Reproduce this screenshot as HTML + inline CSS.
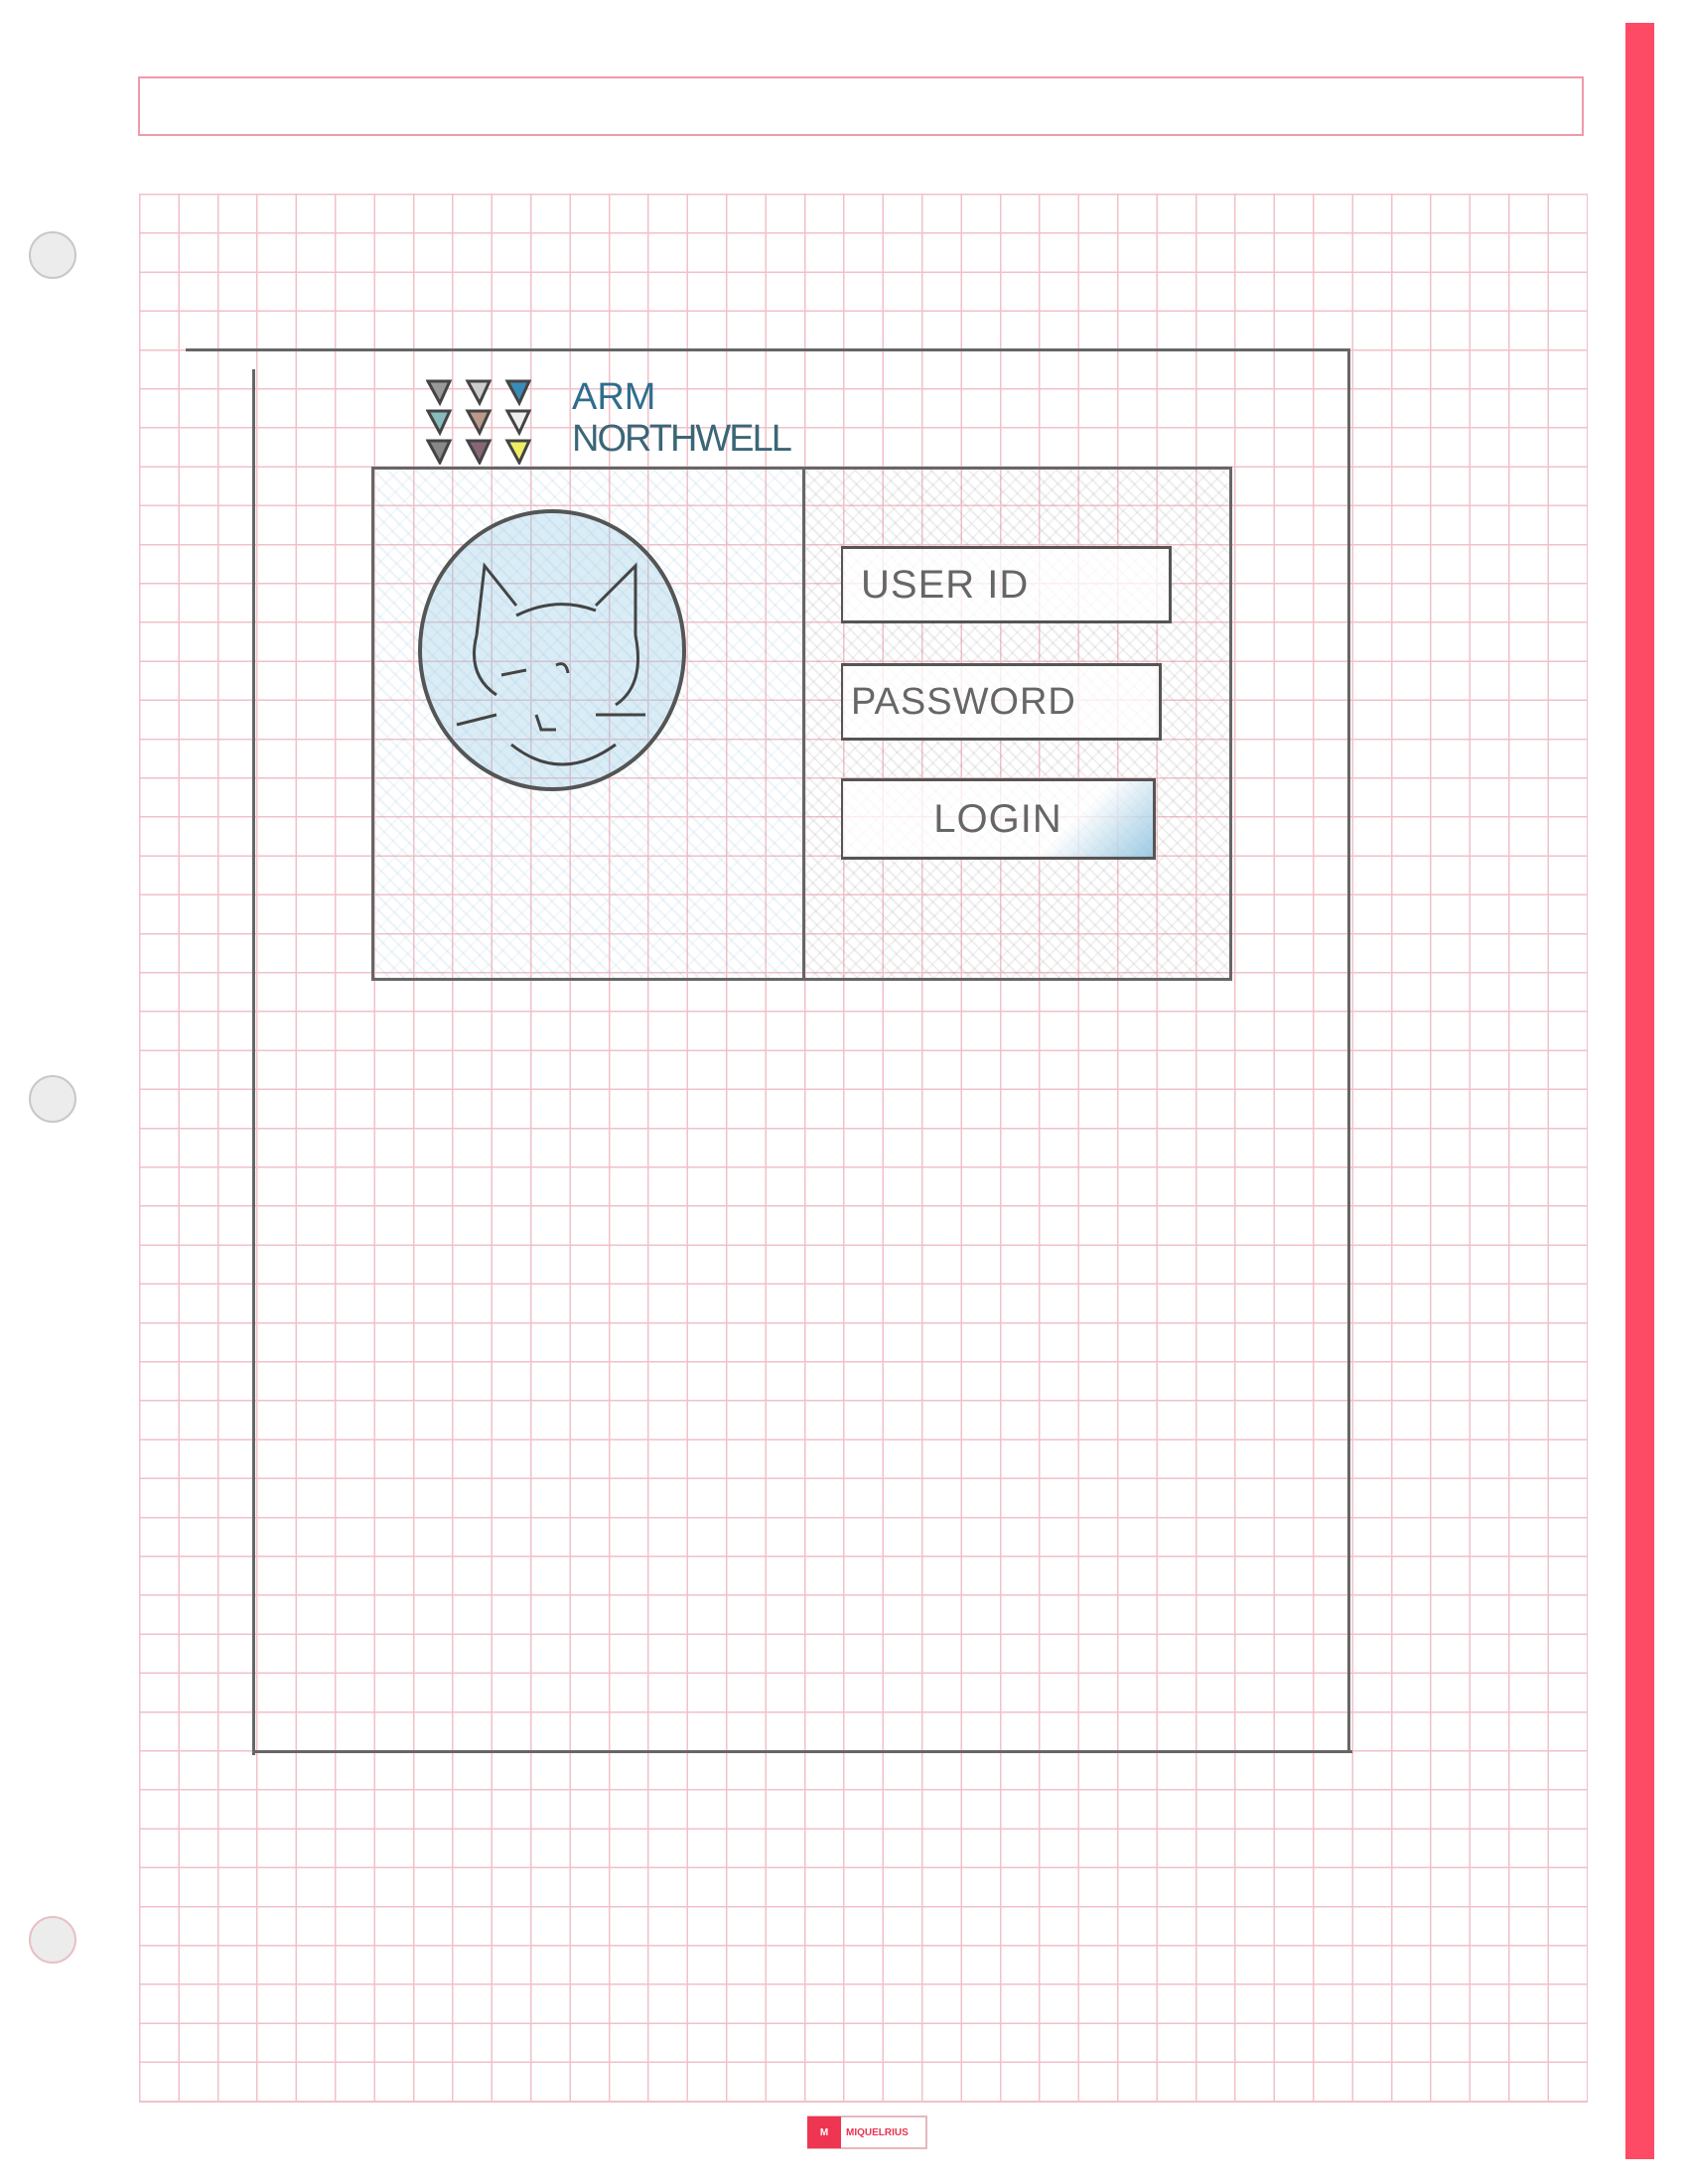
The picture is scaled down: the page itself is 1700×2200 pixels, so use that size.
<!DOCTYPE html>
<html><head><meta charset="utf-8"><style>
body{margin:0;width:1700px;height:2200px;background:#fff;position:relative;overflow:hidden;font-family:"Liberation Sans",sans-serif}
.a{position:absolute}
.grid{left:140px;top:195px;width:1458px;height:1922px;
background-image:repeating-linear-gradient(90deg,#f2c0c8 0 1.5px,transparent 1.5px 39.4px),repeating-linear-gradient(180deg,#f2c0c8 0 1.5px,transparent 1.5px 39.2px);
border-right:1.5px solid #f2c0c8;border-bottom:1.5px solid #f2c0c8}
.hole{width:44px;height:44px;border-radius:50%;background:#ececec;border:2px solid #c8c8c8}
.ln{background:#666}
.inp{border:3px solid #555;border-left-width:2px;background:rgba(255,255,255,.75);color:#666;font-size:40px;display:flex;align-items:center;letter-spacing:1px}
.hatch{background-image:repeating-linear-gradient(45deg,rgba(160,160,160,.18) 0 2px,transparent 2px 9px),repeating-linear-gradient(-45deg,rgba(160,160,160,.14) 0 2px,transparent 2px 11px)}
.hatchb{background-image:repeating-linear-gradient(45deg,rgba(130,190,220,.16) 0 2px,transparent 2px 10px),repeating-linear-gradient(-45deg,rgba(150,190,210,.1) 0 2px,transparent 2px 13px)}
</style></head><body>
<div class="a" style="left:139px;top:77px;width:1452px;height:56px;border:2px solid #ef9aa8"></div>
<div class="a grid"></div>
<div class="a" style="left:1637px;top:23px;width:29px;height:2152px;background:#fd4a65"></div>
<div class="a hole" style="left:29px;top:233px"></div>
<div class="a hole" style="left:29px;top:1083px"></div>
<div class="a hole" style="left:29px;top:1930px;border-color:#e8c0c4"></div>

<div class="a ln" style="left:187px;top:351px;width:1172px;height:3px"></div>
<div class="a ln" style="left:254px;top:372px;width:3px;height:1396px"></div>
<div class="a ln" style="left:254px;top:1763px;width:1108px;height:3px"></div>
<div class="a ln" style="left:1357px;top:351px;width:3px;height:1414px"></div>

<div class="a hatchb" style="left:374px;top:470px;width:434px;height:512px;border:3px solid #666;border-right:none"></div>
<div class="a hatch" style="left:808px;top:470px;width:427px;height:512px;border:3px solid #666"></div>

<svg class="a" style="left:410px;top:500px" width="300" height="310" viewBox="410 500 300 310">
<ellipse cx="556" cy="655" rx="133" ry="140" fill="rgba(150,200,225,.35)" stroke="#555" stroke-width="4"/>
<path d="M480 640 L488 570 L520 610 M600 610 L640 570 L640 640 M480 640 Q470 680 500 700 M640 640 Q650 690 620 710 M520 620 Q560 600 600 615 M505 680 l25 -5 M560 670 q10 -5 12 8 M500 720 l-40 10 M600 720 l50 0 M540 720 l5 15 l15 0 M515 750 q50 40 105 0" stroke="#444" stroke-width="3" fill="none"/>
</svg>

<div class="a" style="left:429px;top:382px;width:110px;height:86px">
<svg width="110" height="86" viewBox="0 0 110 86">
<g stroke="#444" stroke-width="3">
<path d="M2 2h22l-10 22z" fill="#999"/><path d="M42 2h22l-10 22z" fill="#ccc"/><path d="M82 2h22l-10 22z" fill="#3a8cb8"/>
<path d="M2 32h22l-10 22z" fill="#8bb"/><path d="M42 32h22l-10 22z" fill="#b98"/><path d="M82 32h22l-10 22z" fill="#eee"/>
<path d="M2 62h22l-10 22z" fill="#888"/><path d="M42 62h22l-10 22z" fill="#867"/><path d="M82 62h22l-10 22z" fill="#ee6"/>
</g></svg></div>
<div class="a" style="left:576px;top:380px;color:#2f6e8c;font-size:38px;line-height:40px">ARM</div>
<div class="a" style="left:576px;top:420px;color:#3b6677;font-size:38px;line-height:44px;letter-spacing:-2px">NORTHWELL</div>

<div class="a inp" style="left:847px;top:550px;width:310px;height:72px;padding-left:18px">USER ID</div>
<div class="a inp" style="left:847px;top:668px;width:310px;height:72px;padding-left:8px;font-size:38px">PASSWORD</div>
<div class="a inp" style="left:847px;top:784px;width:312px;height:76px;justify-content:center;background-image:linear-gradient(135deg,transparent 70%,rgba(60,150,200,.5))">LOGIN</div>

<div class="a" style="left:813px;top:2131px;width:117px;height:30px;border:2px solid #e6b8be;display:flex;align-items:center;font-size:10px;color:#e8344f;font-weight:bold">
<div style="width:34px;height:32px;background:#ee3552;color:#fff;display:flex;align-items:center;justify-content:center;margin-left:-2px">M</div><span style="margin-left:5px">MIQUELRIUS</span></div>
</body></html>
